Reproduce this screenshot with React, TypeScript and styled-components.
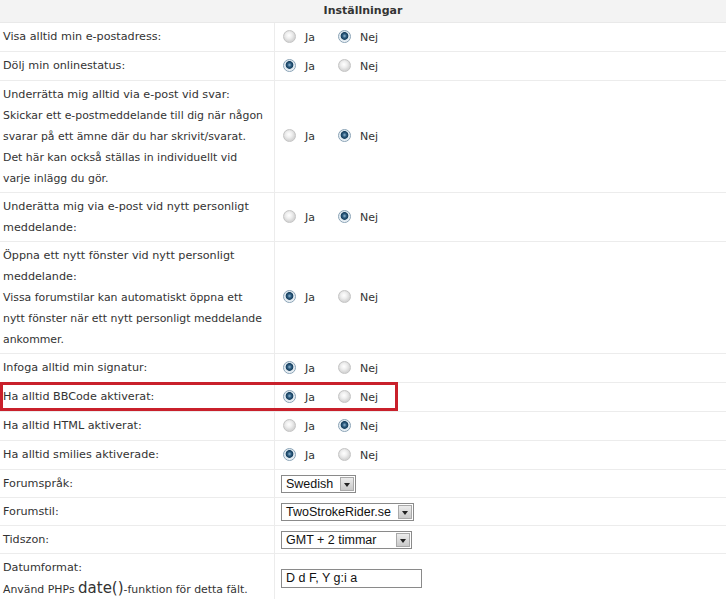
import React from "react";
import styled, { createGlobalStyle } from "styled-components";

const Global = createGlobalStyle`
  html, body { margin: 0; padding: 0; background: #ffffff; }
  body { font-family: "DejaVu Sans", Verdana, sans-serif; color: #333333; }
`;

const Table = styled.div`
  width: 726px;
  background: #ffffff;
`;

const Header = styled.div`
  height: 22px;
  line-height: 21px;
  background: #f3f3f3;
  border-bottom: 1px solid #e9e9e9;
  text-align: center;
  font-weight: bold;
  font-size: 11px;
  color: #333;
`;

const Row = styled.div`
  position: relative;
  display: grid;
  grid-template-columns: 275px 1fr;
  border-bottom: 1px solid #ececec;
`;

const LabelCell = styled.div`
  padding: 3px 3px 3px 3px;
  border-right: 1px solid #ececec;
  font-size: 11.2px;
  line-height: 21px;
  color: #333;
  white-space: nowrap;
`;

const Desc = styled.div`
  font-size: 10.9px;
  line-height: 21px;
  color: #333;
`;

const Big = styled.span`
  font-size: 15px;
`;

const ValueCell = styled.div<{ $tall?: boolean }>`
  display: flex;
  align-items: center;
  padding: 3px 0 3px 8px;
  min-height: ${(p) => (p.$tall ? 22 : 21)}px;
  font-size: 11px;
`;

const Option = styled.label`
  display: inline-flex;
  align-items: center;
  margin-right: 23px;
  color: #333;
`;

const Radio = styled.span<{ $on?: boolean }>`
  width: 11px;
  height: 11px;
  border-radius: 50%;
  border: 1px solid ${(p) => (p.$on ? "#8aa3b6" : "#c4c4c4")};
  background: ${(p) =>
    p.$on
      ? "radial-gradient(circle at 50% 45%, #8fb6d2 0, #2d5b7e 2px, #163f5e 3.5px, #dbe6ee 4.2px, #f3f6f9 6px)"
      : "radial-gradient(circle at 45% 40%, #ffffff 0, #efefef 3px, #d6d6d6 6px)"};
  margin-right: 9px;
  margin-top: -2px;
  flex: none;
`;

const SelectBox = styled.div<{ $w: number }>`
  display: flex;
  align-items: center;
  justify-content: space-between;
  width: ${(p) => p.$w}px;
  height: 18px;
  margin-left: -2px;
  box-sizing: border-box;
  border: 1px solid #8a8a8a;
  background: #fff;
  font-family: "Liberation Sans", Arial, sans-serif;
  font-size: 12.5px;
  color: #111;
  padding-left: 4px;
`;

const Arrow = styled.span`
  width: 14px;
  height: 14px;
  margin: 1px;
  box-sizing: border-box;
  border: 1px solid #a9a9a9;
  background: linear-gradient(#ececec, #c9c9c9);
  display: flex;
  align-items: center;
  justify-content: center;
  flex: none;
  &::after {
    content: "";
    border-left: 3.5px solid transparent;
    border-right: 3.5px solid transparent;
    border-top: 4px solid #222;
    margin-top: 2px;
  }
`;

const TextInput = styled.div`
  width: 141px;
  height: 19px;
  margin-left: -2px;
  box-sizing: border-box;
  border: 1px solid #8a8a8a;
  background: #fff;
  font-family: "Liberation Sans", Arial, sans-serif;
  font-size: 12.5px;
  color: #111;
  padding-left: 4px;
  line-height: 17px;
`;

const Highlight = styled.div`
  position: absolute;
  left: 0;
  top: -1px;
  width: 398px;
  height: 29px;
  box-sizing: border-box;
  border: 3px solid #c9202b;
  pointer-events: none;
`;

type YN = { label: string; desc?: string[]; yes: boolean; highlight?: boolean };

const rows: YN[] = [
  { label: "Visa alltid min e-postadress:", yes: false },
  { label: "Dölj min onlinestatus:", yes: true },
  {
    label: "Underrätta mig alltid via e-post vid svar:",
    desc: [
      "Skickar ett e-postmeddelande till dig när någon",
      "svarar på ett ämne där du har skrivit/svarat.",
      "Det här kan också ställas in individuellt vid",
      "varje inlägg du gör.",
    ],
    yes: false,
  },
  { label: "Underätta mig via e-post vid nytt personligt\nmeddelande:", yes: false },
  {
    label: "Öppna ett nytt fönster vid nytt personligt\nmeddelande:",
    desc: [
      "Vissa forumstilar kan automatiskt öppna ett",
      "nytt fönster när ett nytt personligt meddelande",
      "ankommer.",
    ],
    yes: true,
  },
  { label: "Infoga alltid min signatur:", yes: true },
  { label: "Ha alltid BBCode aktiverat:", yes: true, highlight: true },
  { label: "Ha alltid HTML aktiverat:", yes: false },
  { label: "Ha alltid smilies aktiverade:", yes: true },
];

const Lines = ({ text }: { text: string }) => (
  <>
    {text.split("\n").map((t, i) => (
      <div key={i}>{t}</div>
    ))}
  </>
);

export default function App() {
  return (
    <>
      <Global />
      <Table>
        <Header>Inställningar</Header>
        {rows.map((r, i) => (
          <Row key={i}>
            <LabelCell>
              <Lines text={r.label} />
              {r.desc && r.desc.map((d, j) => <Desc key={j}>{d}</Desc>)}
            </LabelCell>
            <ValueCell $tall>
              <Option>
                <Radio $on={r.yes} />
                Ja
              </Option>
              <Option>
                <Radio $on={!r.yes} />
                Nej
              </Option>
            </ValueCell>
            {r.highlight && <Highlight />}
          </Row>
        ))}
        <Row>
          <LabelCell>Forumspråk:</LabelCell>
          <ValueCell>
            <SelectBox $w={75}>
              Swedish
              <Arrow />
            </SelectBox>
          </ValueCell>
        </Row>
        <Row>
          <LabelCell>Forumstil:</LabelCell>
          <ValueCell>
            <SelectBox $w={133}>
              TwoStrokeRider.se
              <Arrow />
            </SelectBox>
          </ValueCell>
        </Row>
        <Row>
          <LabelCell>Tidszon:</LabelCell>
          <ValueCell>
            <SelectBox $w={131}>
              GMT + 2 timmar
              <Arrow />
            </SelectBox>
          </ValueCell>
        </Row>
        <Row>
          <LabelCell>
            <div>Datumformat:</div>
            <Desc>
              Använd PHPs <Big>date()</Big>-funktion för detta fält.
            </Desc>
          </LabelCell>
          <ValueCell>
            <TextInput>D d F, Y g:i a</TextInput>
          </ValueCell>
        </Row>
      </Table>
    </>
  );
}
